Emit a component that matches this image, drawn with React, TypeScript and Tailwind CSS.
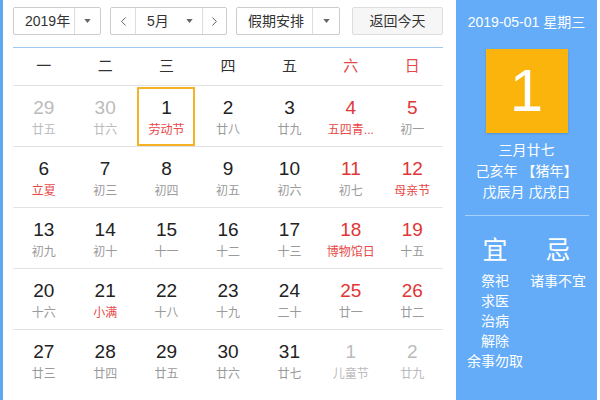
import { ChevronLeft, ChevronRight } from 'lucide-react';

type Day = {
    n: number;
    lunar: string;
    other?: boolean;
    fest?: boolean;
};

const weeks: Day[][] = [
    [
        { n: 29, lunar: '廿五', other: true },
        { n: 30, lunar: '廿六', other: true },
        { n: 1, lunar: '劳动节', fest: true },
        { n: 2, lunar: '廿八' },
        { n: 3, lunar: '廿九' },
        { n: 4, lunar: '五四青...', fest: true },
        { n: 5, lunar: '初一' },
    ],
    [
        { n: 6, lunar: '立夏', fest: true },
        { n: 7, lunar: '初三' },
        { n: 8, lunar: '初四' },
        { n: 9, lunar: '初五' },
        { n: 10, lunar: '初六' },
        { n: 11, lunar: '初七' },
        { n: 12, lunar: '母亲节', fest: true },
    ],
    [
        { n: 13, lunar: '初九' },
        { n: 14, lunar: '初十' },
        { n: 15, lunar: '十一' },
        { n: 16, lunar: '十二' },
        { n: 17, lunar: '十三' },
        { n: 18, lunar: '博物馆日', fest: true },
        { n: 19, lunar: '十五' },
    ],
    [
        { n: 20, lunar: '十六' },
        { n: 21, lunar: '小满', fest: true },
        { n: 22, lunar: '十八' },
        { n: 23, lunar: '十九' },
        { n: 24, lunar: '二十' },
        { n: 25, lunar: '廿一' },
        { n: 26, lunar: '廿二' },
    ],
    [
        { n: 27, lunar: '廿三' },
        { n: 28, lunar: '廿四' },
        { n: 29, lunar: '廿五' },
        { n: 30, lunar: '廿六' },
        { n: 31, lunar: '廿七' },
        { n: 1, lunar: '儿童节', other: true },
        { n: 2, lunar: '廿九', other: true },
    ],
];

const weekdays = ['一', '二', '三', '四', '五', '六', '日'];

function Caret() {
    return (
        <svg width="7" height="4" viewBox="0 0 8 5" className="text-[#666]">
            <path d="M0 0h8L4 5z" fill="currentColor" />
        </svg>
    );
}

export default function App() {
    return (
        <div
            className="flex w-[600px] h-[400px] bg-white overflow-hidden text-[#333]"
            style={{ fontFamily: '"Liberation Sans", "Noto Sans CJK SC", sans-serif' }}
        >
            {/* Calendar */}
            <div className="w-[456px] shrink-0 border-l-[3px] border-[#5ea8f2] pl-[10px] pr-[13px]">
                {/* Toolbar */}
                <div className="flex items-center h-[28px] mt-[7px] text-[14px]">
                    <div className="flex items-center w-[88px] h-full border border-[#ccc] rounded-[2px]">
                        <span className="flex-1 pl-[11px]">2019年</span>
                        <span className="w-[26px] h-full border-l border-[#ddd] flex items-center justify-center">
                            <Caret />
                        </span>
                    </div>
                    <div className="flex items-center w-[117px] h-full border border-[#ccc] rounded-[2px] ml-[9px]">
                        <span className="w-[25px] h-full border-r border-[#ddd] flex items-center justify-center text-[#555]">
                            <ChevronLeft size={15} strokeWidth={1.5} />
                        </span>
                        <span className="flex-1 flex items-center pl-[11px] pr-[9px] justify-between">
                            <span>5月</span>
                            <Caret />
                        </span>
                        <span className="w-[24px] h-full border-l border-[#ddd] flex items-center justify-center text-[#555]">
                            <ChevronRight size={15} strokeWidth={1.5} />
                        </span>
                    </div>
                    <div className="flex items-center w-[104px] h-full border border-[#ccc] rounded-[2px] ml-[9px]">
                        <span className="flex-1 pl-[11px]">假期安排</span>
                        <span className="w-[27px] h-full border-l border-[#ddd] flex items-center justify-center">
                            <Caret />
                        </span>
                    </div>
                    <div className="w-[91px] h-full ml-[12px] border border-[#ddd] bg-[#f6f6f6] rounded-[2px] flex items-center justify-center">
                        返回今天
                    </div>
                </div>

                {/* Weekdays */}
                <div className="mt-[12px] border-t border-[#9ec9f1] grid grid-cols-7 h-[38px] items-center text-[15px]">
                    {weekdays.map((w, i) => (
                        <div key={w} className={`text-center ${i >= 5 ? 'text-[#e24a4a]' : 'text-[#333]'}`}>
                            {w}
                        </div>
                    ))}
                </div>

                {/* Days */}
                {weeks.map((week, wi) => (
                    <div key={wi} className="grid grid-cols-7 h-[61px] border-t border-[#e2e2e2]">
                        {week.map((d, di) => {
                            const weekend = di >= 5;
                            const numColor = d.other ? 'text-[#bbbbbb]' : weekend ? 'text-[#e03636]' : 'text-[#222]';
                            const lunarColor = d.other ? 'text-[#bbbbbb]' : d.fest ? 'text-[#e84848]' : 'text-[#9a9a9a]';
                            const selected = wi === 0 && d.n === 1 && !d.other;
                            return (
                                <div key={di} className="relative flex flex-col items-center pt-[12px]">
                                    {selected && (
                                        <div className="absolute left-[1px] right-[2px] top-[1px] bottom-0 border-2 border-[#f5b225]" />
                                    )}
                                    <div className={`text-[19px] leading-[20px] ${numColor}`}>{d.n}</div>
                                    <div className={`mt-[4px] text-[12px] leading-[16px] whitespace-nowrap ${lunarColor}`}>
                                        {d.lunar}
                                    </div>
                                </div>
                            );
                        })}
                    </div>
                ))}
            </div>

            {/* Side panel */}
            <div className="w-[141px] shrink-0 h-full bg-[#64acf8] text-white flex flex-col items-center">
                <div className="mt-[13px] text-[14px] leading-[18px] whitespace-nowrap">2019-05-01 星期三</div>
                <div className="mt-[18px] w-[82px] h-[84px] bg-[#fbb40c] flex items-center justify-center text-[60px] leading-none font-light shadow-[0_1px_2px_rgba(0,0,0,0.15)]">
                    1
                </div>
                <div className="mt-[7px] text-[14px] leading-[21px] text-center">
                    <div>三月廿七</div>
                    <div>己亥年 【猪年】</div>
                    <div>戊辰月 戊戌日</div>
                </div>
                <div className="mt-[12px] w-[124px] border-t border-[#a9d0fa]" />
                <div className="mt-[19px] w-[126px] grid grid-cols-2">
                    <div className="flex flex-col items-center">
                        <div className="text-[25px] leading-[30px]">宜</div>
                        <div className="mt-[6px] text-[14px] leading-[20px] text-center">
                            <div>祭祀</div>
                            <div>求医</div>
                            <div>治病</div>
                            <div>解除</div>
                            <div className="whitespace-nowrap">余事勿取</div>
                        </div>
                    </div>
                    <div className="flex flex-col items-center">
                        <div className="text-[25px] leading-[30px]">忌</div>
                        <div className="mt-[6px] text-[14px] leading-[20px] whitespace-nowrap">诸事不宜</div>
                    </div>
                </div>
            </div>
        </div>
    );
}
